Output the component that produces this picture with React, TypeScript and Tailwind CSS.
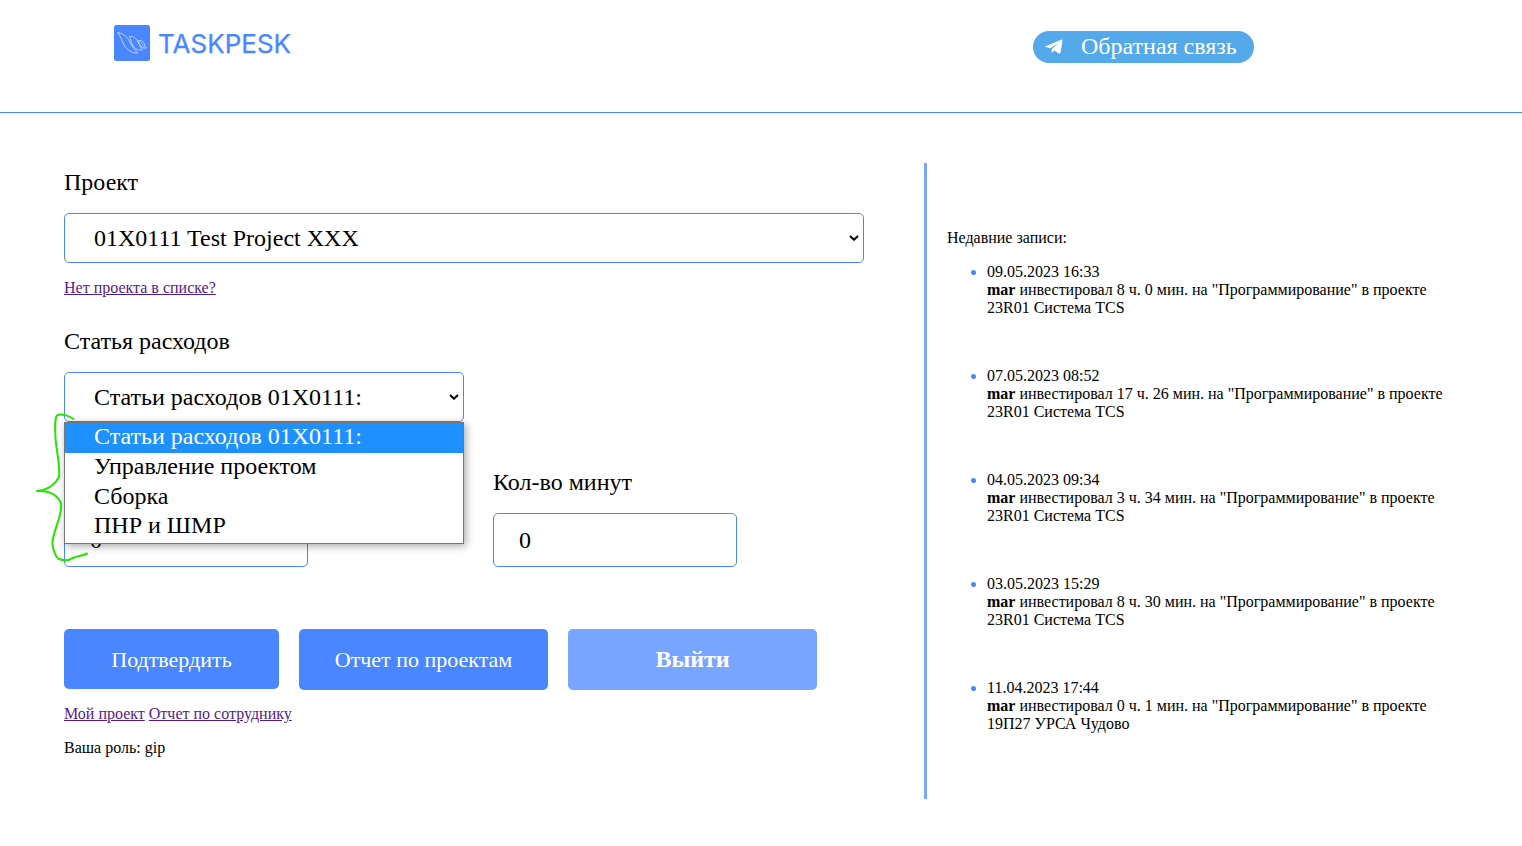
import React from "react";

const serif = "font-['Liberation_Serif',serif]";

const entries = [
  { date: "09.05.2023 16:33", text: 'инвестировал 8 ч. 0 мин. на "Программирование" в проекте', project: "23R01 Система TCS" },
  { date: "07.05.2023 08:52", text: 'инвестировал 17 ч. 26 мин. на "Программирование" в проекте', project: "23R01 Система TCS" },
  { date: "04.05.2023 09:34", text: 'инвестировал 3 ч. 34 мин. на "Программирование" в проекте', project: "23R01 Система TCS" },
  { date: "03.05.2023 15:29", text: 'инвестировал 8 ч. 30 мин. на "Программирование" в проекте', project: "23R01 Система TCS" },
  { date: "11.04.2023 17:44", text: 'инвестировал 0 ч. 1 мин. на "Программирование" в проекте', project: "19П27 УРСА Чудово" },
];

const options = ["Статьи расходов 01X0111:", "Управление проектом", "Сборка", "ПНР и ШМР"];

function LogoMark() {
  return (
    <svg width="36" height="36" viewBox="0 0 36 36" fill="none">
      <rect width="36" height="36" rx="2.5" fill="#4a86ff" />
      <g stroke="#bcd2ff" strokeWidth="1" strokeLinejoin="round">
        <path d="M3.500 7.500C8 8 12.500 11 15 15.500C17.500 20 20 24.500 24 28C19 28.500 13.500 25.500 10 20C8 16 7 11.500 3.500 7.500Z" />
        <path d="M15.500 11.500C19 11 22 13 24 17C25.500 20 26.500 22.500 28.500 24.800C25 26 21 24 18.500 20C17 17 16.800 14 15.500 11.500Z" />
        <path d="M24.500 15.500C27.500 15 29.500 16.500 30.300 18.800C30.700 20.500 31.300 22 32.300 23C30 23.800 27 22.300 25.700 20C24.900 18.500 25 17 24.500 15.500Z" />
        <path d="M26 16.500C27.500 18 29 20.500 30.500 22.500" strokeWidth="0.7" />
      </g>
    </svg>
  );
}

function Chevron() {
  return (
    <svg width="10" height="6" viewBox="0 0 10 6" fill="none">
      <path d="M1 1L5 4.700L9 1" stroke="#000" strokeWidth="2" />
    </svg>
  );
}

function SelectBox({ value, className }: { value: string; className: string }) {
  return (
    <div className={`flex h-[50px] items-center justify-between rounded-[5px] border border-[#4a86f7] bg-white pr-[4px] pl-[29px] ${className}`}>
      <span>{value}</span>
      <Chevron />
    </div>
  );
}

function Brace() {
  return (
    <svg className="pointer-events-none absolute top-[38px] left-[-29px] z-20" width="54" height="152" viewBox="0 0 54 152" fill="none">
      <path
        d="M38.500 9C34 5.500 27 3.500 22.500 5C19.500 7 20 18 20.500 28C21.500 42 25.500 56 24 67C21 73 14 80 2 81C14 80.500 22 84 26 93C28 106 17 122 17.500 134C18 140 21 147 23 148.500C26 150 31 151 35 149.500C39 146.500 47 146 52 143.500"
        stroke="#22e600"
        strokeWidth="2"
        strokeLinecap="round"
        strokeLinejoin="round"
      />
    </svg>
  );
}

export default function App() {
  return (
    <div className={`h-[846px] w-[1522px] overflow-hidden bg-white text-[16px] leading-[18px] text-black ${serif}`}>
      <header className="flex h-[113px] items-start justify-between border-b border-[#4a86f7] pr-[268px] pl-[114px]">
        <div className="flex items-start pt-[25px]">
          <LogoMark />
          <span className="ml-[8px] pt-[1px] font-['Inter',sans-serif] text-[26px] leading-[36px] text-[#4a86ff] [-webkit-text-stroke:0.25px_#4a86ff]">TASKPESK</span>
        </div>
        <button className="mt-[31px] flex h-[32px] w-[221px] items-center rounded-full bg-[#54a9eb] pl-[12px] text-[24px] leading-[28px] text-white">
          <svg width="18" height="16" viewBox="0 0 18 16">
            <path d="M0.600 7.200L16.200 0.700C17.200 0.400 17.600 0.900 17.400 1.900L15.600 13.300C15.300 14.600 14.500 14.800 13.500 14.300L9.500 11.400L7.500 13.300C7 13.700 6.500 13.400 6.600 12.700L7 10.100L13.600 4L5.500 9.200L0.700 8.100C-0.100 7.800 0 7.500 0.600 7.200Z" fill="white" />
          </svg>
          <span className="ml-[18px] pb-[2px]">Обратная связь</span>
        </button>
      </header>

      <main className="flex pt-[50px] pl-[64px]">
        <section className="w-[860px] pt-[5px]">
          <div className="text-[24px] leading-[28px]">Проект</div>
          <SelectBox value="01X0111 Test Project XXX" className="mt-[17px] w-[800px] text-[24px]" />
          <div className="mt-[16px]">
            <a className="text-[#551a8b] underline">Нет проекта в списке?</a>
          </div>

          <div className="mt-[30px] text-[24px] leading-[28px]">Статья расходов</div>
          <div className="relative mt-[17px] w-[400px] text-[24px]">
            <SelectBox value="Статьи расходов 01X0111:" className="w-[400px]" />
            <ul className="absolute top-[50px] left-0 z-10 h-[122px] w-[400px] border border-[#767676] bg-white shadow-[2px_2px_8px_rgba(0,0,0,0.35)]">
              {options.map((option, i) => (
                <li key={option} className={`flex items-center pb-[4px] pl-[29px] leading-[26px] ${i === 0 ? "h-[30px] bg-[#1e90ff] text-white" : "h-[29.700px]"}`}>
                  {option}
                </li>
              ))}
            </ul>
            <Brace />
          </div>

          <div className="mt-[46px] flex items-end gap-[185px] text-[24px]">
            <div className="flex h-[54px] w-[244px] items-center rounded-[5px] border border-[#4a86f7] pl-[25px]">0</div>
            <div>
              <div className="leading-[28px]">Кол-во минут</div>
              <div className="mt-[17px] flex h-[54px] w-[244px] items-center rounded-[5px] border border-[#4a86f7] pl-[25px]">0</div>
            </div>
          </div>

          <div className="mt-[62px] flex items-start gap-[20px] text-[22px] text-white">
            <button className="h-[60px] w-[215px] rounded-[5px] bg-[#4a86ff] pt-[2px]">Подтвердить</button>
            <button className="h-[61px] w-[249px] rounded-[5px] bg-[#4a86ff]">Отчет по проектам</button>
            <button className="h-[61px] w-[249px] rounded-[5px] bg-[#78a5ff] pb-[2px] text-[24px] font-bold">Выйти</button>
          </div>
          <div className="mt-[15px] flex gap-[4px] text-[#551a8b]">
            <a className="underline">Мой проект</a>
            <a className="underline">Отчет по сотруднику</a>
          </div>
          <div className="mt-[16px]">Ваша роль: gip</div>
        </section>

        <aside className="h-[636px] w-[534px] border-l-[3px] border-[#78a5ff] pt-[66px] pl-[20px]">
          <div>Недавние записи:</div>
          <ul className="mt-[16px] flex flex-col gap-[50px] pl-[24px]">
            {entries.map((entry) => (
              <li key={entry.date} className="flex">
                <span className="mt-[7px] mr-[11px] size-[5px] shrink-0 rounded-full bg-[#4a86ff]" />
                <div className="whitespace-nowrap">
                  <div>{entry.date}</div>
                  <div>
                    <b>mar</b> {entry.text}
                  </div>
                  <div>{entry.project}</div>
                </div>
              </li>
            ))}
          </ul>
        </aside>
      </main>
    </div>
  );
}
